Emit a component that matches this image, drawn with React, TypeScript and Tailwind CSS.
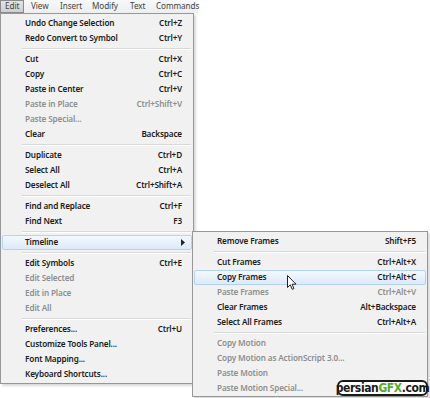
import React from "react";

type Item =
  | { sep: true }
  | { label: string; sc?: string; dis?: boolean; hl?: boolean; arrow?: boolean };

const mainItems: Item[] = [
  { label: "Undo Change Selection", sc: "Ctrl+Z" },
  { label: "Redo Convert to Symbol", sc: "Ctrl+Y" },
  { sep: true },
  { label: "Cut", sc: "Ctrl+X" },
  { label: "Copy", sc: "Ctrl+C" },
  { label: "Paste in Center", sc: "Ctrl+V" },
  { label: "Paste in Place", sc: "Ctrl+Shift+V", dis: true },
  { label: "Paste Special...", dis: true },
  { label: "Clear", sc: "Backspace" },
  { sep: true },
  { label: "Duplicate", sc: "Ctrl+D" },
  { label: "Select All", sc: "Ctrl+A" },
  { label: "Deselect All", sc: "Ctrl+Shift+A" },
  { sep: true },
  { label: "Find and Replace", sc: "Ctrl+F" },
  { label: "Find Next", sc: "F3" },
  { sep: true },
  { label: "Timeline", hl: true, arrow: true },
  { sep: true },
  { label: "Edit Symbols", sc: "Ctrl+E" },
  { label: "Edit Selected", dis: true },
  { label: "Edit in Place", dis: true },
  { label: "Edit All", dis: true },
  { sep: true },
  { label: "Preferences...", sc: "Ctrl+U" },
  { label: "Customize Tools Panel..." },
  { label: "Font Mapping..." },
  { label: "Keyboard Shortcuts..." },
];

const subItems: Item[] = [
  { label: "Remove Frames", sc: "Shift+F5" },
  { sep: true },
  { label: "Cut Frames", sc: "Ctrl+Alt+X" },
  { label: "Copy Frames", sc: "Ctrl+Alt+C", hl: true },
  { label: "Paste Frames", sc: "Ctrl+Alt+V", dis: true },
  { label: "Clear Frames", sc: "Alt+Backspace" },
  { label: "Select All Frames", sc: "Ctrl+Alt+A" },
  { sep: true },
  { label: "Copy Motion", dis: true },
  { label: "Copy Motion as ActionScript 3.0...", dis: true },
  { label: "Paste Motion", dis: true },
  { label: "Paste Motion Special...", dis: true },
];

function Rows({ items }: { items: Item[] }) {
  return (
    <>
      {items.map((it, i) => {
        if ("sep" in it) {
          return (
            <div key={i} className="h-[6px] flex flex-col justify-center ml-[21px] mr-[2px]">
              <div className="h-px bg-[#d9d9d9]" />
              <div className="h-px bg-white" />
            </div>
          );
        }
        const color = it.dis ? "text-[#8e8e8e]" : "text-[#1b1b1b]";
        return (
          <div
            key={i}
            className={`h-[15px] flex items-center ${color} ${
              it.hl
                ? "mx-[1px] rounded-[2px] border border-[#b3d3f5] bg-gradient-to-b from-[#f3f8fe] to-[#dde9f9]"
                : "mx-[1px] border border-transparent"
            }`}
          >
            <div className="flex-1 flex items-center justify-between pl-[22px] pr-[9px]">
              <span>{it.label}</span>
              {it.sc && <span>{it.sc}</span>}
              {it.arrow && (
                <svg width="4" height="7" viewBox="0 0 4 7" className="mr-[-3px]">
                  <path d="M0 0 L4 3.5 L0 7 Z" fill="#222" />
                </svg>
              )}
            </div>
          </div>
        );
      })}
    </>
  );
}

export default function App() {
  const font = { fontFamily: '"Noto Sans", Lato, sans-serif' };
  return (
    <div
      className="relative w-[430px] h-[398px] bg-white overflow-hidden text-[8.2px] leading-none font-semibold tracking-[-0.15px]"
      style={font}
    >
      {/* Menu bar */}
      <div className="flex h-[13px] w-[198px] bg-gradient-to-b from-[#f7f8f9] to-[#eceef0] text-[#444] font-normal text-[8.2px] tracking-[-0.1px]">
        <div className="w-[24px] h-[13px] pl-[4px] flex items-center border border-[#8a8a8a] bg-gradient-to-b from-[#e4e4e4] to-[#cfcfcf]">
          Edit
        </div>
        <div className="w-[32px] pl-[7px] flex items-center">View</div>
        <div className="w-[32px] pl-[4px] flex items-center">Insert</div>
        <div className="w-[38px] pl-[4px] flex items-center">Modify</div>
        <div className="w-[27px] pl-[4px] flex items-center">Text</div>
        <div className="w-[45px] pl-[3px] flex items-center">Commands</div>
      </div>

      {/* Main menu */}
      <div className="w-[194px] border border-[#979797] bg-[#f1f1f1] pt-[2px] pb-[1px] shadow-[2px_2px_2px_rgba(0,0,0,0.15)]">
        <Rows items={mainItems} />
      </div>

      {/* Submenu */}
      <div className="absolute left-[192px] top-[231px] w-[236px] h-[166px] border border-[#979797] bg-[#f1f1f1] pt-[2px] shadow-[2px_2px_2px_rgba(0,0,0,0.15)]">
        <Rows items={subItems} />
      </div>

      {/* Cursor */}
      <svg className="absolute left-[287px] top-[275px]" width="10" height="16" viewBox="0 0 10 16">
        <path
          d="M0.5 0.5 L0.5 12.5 L3.3 9.8 L5.2 14.3 L6.9 13.6 L5.1 9.2 L9 9.2 Z"
          fill="#fff"
          stroke="#222"
          strokeWidth="1"
          strokeLinejoin="round"
        />
      </svg>

      {/* Watermark */}
      <div
        className="absolute left-[337px] top-[380px] w-[91px] h-[16px] rounded-[6px] border-2 border-[#1a1a1a] bg-white flex items-center justify-center text-[12px] font-bold leading-none tracking-[-0.4px]"
        style={{ fontFamily: '"DejaVu Sans Condensed", "Liberation Sans Narrow", "Liberation Sans", sans-serif' }}
      >
        <span className="text-[#1a1a1a]">persian</span>
        <span className="text-[#5aa832]">GFX</span>
        <span className="text-[#1a1a1a]">.com</span>
      </div>
    </div>
  );
}
